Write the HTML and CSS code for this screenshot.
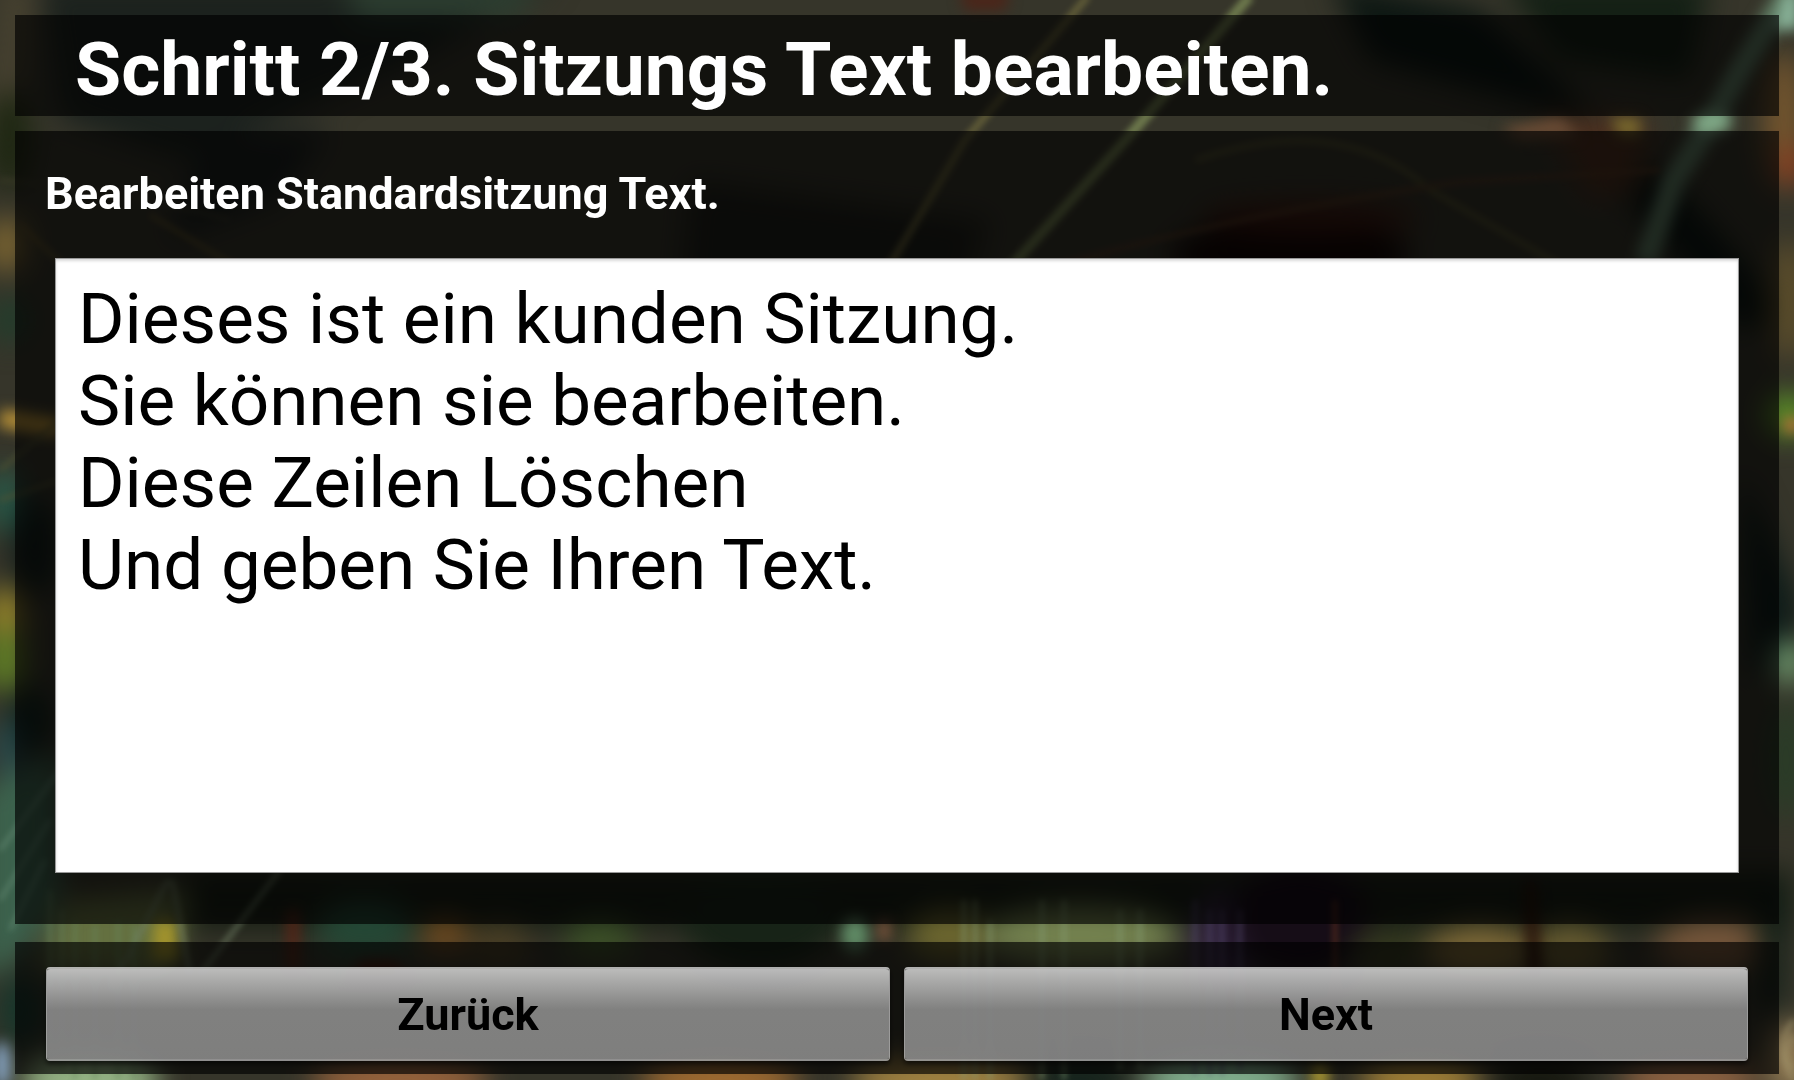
FILE: index.html
```html
<!DOCTYPE html>
<html lang="de">
  <head>
    <meta charset="UTF-8" />
    <meta name="viewport" content="width=device-width, initial-scale=1.0" />
    <title>Sitzungs Text bearbeiten</title>

    <link rel="stylesheet" href="styles.css">
  </head>

  <body>
    <svg class="backdrop" viewBox="0 0 1794 1080" preserveAspectRatio="none" aria-hidden="true">
      <defs>
        <filter id="soft" x="-50%" y="-50%" width="200%" height="200%" color-interpolation-filters="sRGB">
          <feGaussianBlur stdDeviation="14" />
        </filter>
        <filter id="glow" x="-50%" y="-50%" width="200%" height="200%" color-interpolation-filters="sRGB">
          <feGaussianBlur stdDeviation="7" />
        </filter>
        <filter id="ray" x="-20%" y="-20%" width="140%" height="140%" color-interpolation-filters="sRGB">
          <feGaussianBlur stdDeviation="3" />
        </filter>
      </defs>
      <rect width="1794" height="1080" fill="#36352a" />

      <!-- large dark and coloured areas -->
      <g filter="url(#soft)">
        <path d="M40 -20 L560 -20 L420 60 L180 160 L60 120 Z" fill="#1c221e" />
        <path d="M340 -20 L540 -20 L520 20 L360 20 Z" fill="#2b3d30" />
        <path d="M200 140 L330 130 L280 200 L170 240 Z" fill="#1b201f" />
        <path d="M690 180 L990 220 L960 300 L680 300 Z" fill="#1f201b" />
        <path d="M1330 -20 L1480 10 L1690 200 L1794 320 L1740 330 L1550 110 L1370 60 Z" fill="#0d1713" />
        <path d="M1500 -20 L1710 -20 L1690 80 L1560 60 Z" fill="#142015" />
        <ellipse cx="1290" cy="255" rx="120" ry="34" fill="#120706" />
        <ellipse cx="1310" cy="218" rx="110" ry="16" fill="#3d1a12" />
        <path d="M1540 110 L1650 120 L1640 190 L1590 200 Z" fill="#4c3020" />
        <path d="M0 -20 L40 -20 L20 140 L-20 140 Z" fill="#45402f" />
        <ellipse cx="10" cy="140" rx="22" ry="50" fill="#1e2712" />
        <ellipse cx="6" cy="245" rx="20" ry="28" fill="#7a6431" />
        <ellipse cx="10" cy="320" rx="20" ry="24" fill="#223d2c" />
        <ellipse cx="35" cy="545" rx="22" ry="50" fill="#101c19" />
        <ellipse cx="5" cy="500" rx="16" ry="34" fill="#285c4b" />
        <ellipse cx="5" cy="620" rx="18" ry="34" fill="#9b8829" />
        <ellipse cx="5" cy="660" rx="20" ry="32" fill="#618025" />
        <ellipse cx="30" cy="720" rx="20" ry="34" fill="#0e211b" />
        <ellipse cx="8" cy="750" rx="12" ry="34" fill="#274f54" />
        <path d="M-20 790 L60 750 L60 900 L20 960 L-20 980 Z" fill="#3c624d" />
        <ellipse cx="1784" cy="120" rx="20" ry="70" fill="#75562e" />
        <ellipse cx="1790" cy="165" rx="14" ry="20" fill="#963f1f" />
        <ellipse cx="1788" cy="300" rx="20" ry="60" fill="#5d4e2b" />
        <ellipse cx="1788" cy="415" rx="22" ry="22" fill="#5c9427" />
        <path d="M1740 470 L1800 600 L1794 650 L1750 680 Z" fill="#0f1c19" />
        <ellipse cx="1788" cy="662" rx="16" ry="22" fill="#76a476" />
        <ellipse cx="1786" cy="760" rx="20" ry="60" fill="#293c27" />
        <path d="M180 870 L1794 870 L1794 930 L180 930 Z" fill="#181f15" />
        <path d="M60 900 L190 890 L170 980 L40 970 Z" fill="#647040" />
        <ellipse cx="365" cy="930" rx="50" ry="30" fill="#244735" />
        <ellipse cx="445" cy="935" rx="24" ry="18" fill="#744c1f" />
        <ellipse cx="500" cy="945" rx="30" ry="24" fill="#4a3f26" />
        <ellipse cx="600" cy="940" rx="36" ry="20" fill="#3d5228" />
        <ellipse cx="760" cy="920" rx="80" ry="50" fill="#172317" />
        <ellipse cx="950" cy="935" rx="44" ry="26" fill="#6d672f" />
        <ellipse cx="1080" cy="935" rx="100" ry="30" fill="#74824f" />
        <ellipse cx="1225" cy="940" rx="34" ry="50" fill="#33243f" />
        <ellipse cx="1300" cy="920" rx="70" ry="60" fill="#160d17" />
        <ellipse cx="1390" cy="950" rx="40" ry="20" fill="#363a20" />
        <ellipse cx="1480" cy="950" rx="55" ry="26" fill="#7c6837" />
        <ellipse cx="1570" cy="950" rx="40" ry="28" fill="#655a30" />
        <ellipse cx="1715" cy="945" rx="60" ry="28" fill="#74553a" />
        <ellipse cx="1770" cy="950" rx="12" ry="70" fill="#0e1d16" />
        <ellipse cx="20" cy="1010" rx="22" ry="36" fill="#17362b" />
        <ellipse cx="90" cy="1080" rx="70" ry="30" fill="#94b384" />
        <ellipse cx="400" cy="1080" rx="90" ry="22" fill="#9c653d" />
        <ellipse cx="720" cy="1080" rx="80" ry="22" fill="#a66e31" />
        <ellipse cx="940" cy="1080" rx="90" ry="22" fill="#a88742" />
        <ellipse cx="1080" cy="1080" rx="50" ry="24" fill="#14231c" />
        <ellipse cx="1220" cy="1080" rx="80" ry="24" fill="#84b492" />
        <ellipse cx="1420" cy="1080" rx="60" ry="22" fill="#a58236" />
        <ellipse cx="1540" cy="1080" rx="50" ry="24" fill="#15170f" />
        <ellipse cx="1690" cy="1080" rx="70" ry="22" fill="#926442" />
        <ellipse cx="1790" cy="1060" rx="22" ry="40" fill="#957d55" />
      </g>

      <!-- smaller lights -->
      <g filter="url(#glow)">
        <path d="M1790 -10 L1740 70 L1712 120 L1674 180 L1645 262" fill="none" stroke="#5e7a62" stroke-width="22" />
        <ellipse cx="1712" cy="122" rx="20" ry="12" fill="#7fa886" />
        <path d="M1785 -10 L1800 -10 L1800 30 L1775 30 Z" fill="#89b399" />
        <path d="M960 -8 L1010 -8 L1005 10 L965 10 Z" fill="#4d2418" />
        <path d="M0 418 L60 428" fill="none" stroke="#b08b36" stroke-width="18" />
        <path d="M1500 128 L1560 118 L1580 136 L1520 140 Z" fill="#6b4c35" />
        <path d="M1610 118 L1640 118 L1640 136 L1620 136 Z" fill="#7b6b2d" />
        <ellipse cx="1792" cy="425" rx="8" ry="7" fill="#ce6f3a" />
        <path d="M152 960 L154 920 L176 920 L178 960 Z" fill="#a2932c" />
        <path d="M288 970 L288 910 L298 910 L298 970 Z" fill="#5e2415" />
        <path d="M350 980 L410 980 L395 960 L360 960 Z" fill="#451e14" />
        <ellipse cx="855" cy="935" rx="14" ry="18" fill="#5f8a65" />
        <ellipse cx="884" cy="930" rx="6" ry="12" fill="#8c5e43" />
        <path d="M1525 880 L1535 880 L1542 975 L1528 975 Z" fill="#281109" />
        <ellipse cx="2" cy="1065" rx="8" ry="24" fill="#8aa9c8" />
        <ellipse cx="1320" cy="1076" rx="8" ry="16" fill="#b6a231" />
      </g>

      <!-- thin rays -->
      <g filter="url(#ray)" fill="none" opacity="0.75">
        <path d="M1088 -4 L965 140 L875 290" stroke="#716b3d" stroke-width="7" />
        <path d="M1250 -4 L1130 135 L990 290" stroke="#809058" stroke-width="10" />
        <path d="M1196 160 Q1340 110 1430 190 L1560 265" stroke="#57552f" stroke-width="5" />
        <path d="M1030 275 Q1200 220 1460 182 L1660 170" stroke="#553a25" stroke-width="5" />
        <path d="M20 225 L60 262 M150 215 L250 275" stroke="#5b4f2a" stroke-width="5" />
        <path d="M0 180 Q120 190 230 220" stroke="#3d3c29" stroke-width="4" />
        <path d="M0 470 L60 420 M0 500 L60 480" stroke="#505132" stroke-width="4" />
        <path d="M0 850 L60 770 M0 900 L50 820 M10 930 L45 860" stroke="#6b917a" stroke-width="3" />
        <path d="M200 975 L280 870 M110 990 L168 880 M172 880 L190 975" stroke="#718066" stroke-width="4" />
        <path d="M50 890 V1060 M62 910 V1070 M75 920 V1080 M95 925 V1080 M118 920 V1080 M134 925 V1080" stroke="#68865d" stroke-width="3" />
        <path d="M964 900 V1080 M975 900 V1080 M990 920 V1080 M1042 900 V1080 M1064 900 V1080 M1120 910 V1070 M1140 910 V1070" stroke="#86a078" stroke-width="3" />
        <path d="M1195 900 V1075 M1210 910 V1075 M1222 910 V1075 M1240 910 V1070" stroke="#554d70" stroke-width="3" />
        <path d="M1335 900 V1060" stroke="#67331f" stroke-width="4" />
        <path d="M1794 1020 Q1770 1050 1794 1080 M1794 1035 Q1780 1055 1794 1070" stroke="#a59a70" stroke-width="3" />
      </g>
    </svg>

    <header class="panel title-bar">
      <h1>Schritt 2/3. Sitzungs Text bearbeiten.</h1>
    </header>

    <main class="panel editor">
      <label for="sessionText">Bearbeiten Standardsitzung Text.</label>
      <textarea id="sessionText" name="sessionText" spellcheck="false">Dieses ist ein kunden Sitzung.
Sie können sie bearbeiten.
Diese Zeilen Löschen
Und geben Sie Ihren Text.</textarea>
    </main>

    <footer class="panel buttons">
      <button type="button">Zurück</button>
      <button type="button">Next</button>
    </footer>
  </body>
</html>
```

FILE: styles.css
```css
* {
  box-sizing: border-box;
}

body {
  margin: 0;
  min-height: 100vh;
  padding: 15px 15px 6px;
  display: flex;
  flex-direction: column;
  background-color: #34332a;
  font-family: Roboto, "Liberation Sans", sans-serif;
  color: #fff;
}

.backdrop {
  position: fixed;
  top: 0;
  left: 0;
  width: 100%;
  height: 100%;
  z-index: -1;
}

.panel {
  background-color: rgba(0, 0, 0, 0.65);
}

.title-bar {
  padding: 10px 60px 2px;
  margin-bottom: 15px;
}

.title-bar h1 {
  margin: 0;
  font-size: 75px;
  line-height: 89px;
  font-weight: bold;
}

.editor {
  flex: 1;
  display: flex;
  flex-direction: column;
  padding: 36px 40px 51px;
  margin-bottom: 18px;
}

.editor label {
  margin: 0 -10px 38px;
  font-size: 45px;
  line-height: 53px;
  font-weight: bold;
}

.editor textarea {
  flex: 1;
  width: 100%;
  min-height: 370px;
  padding: 19px 22px;
  border: 1px solid #999;
  background-color: #fff;
  box-shadow: inset 0 2px 3px rgba(0, 0, 0, 0.15);
  font-family: inherit;
  font-size: 71px;
  line-height: 82px;
  color: #000;
  resize: none;
  outline: none;
}

.buttons {
  display: flex;
  gap: 14px;
  padding: 25px 31px 13px;
}

.buttons button {
  flex: 1;
  height: 94px;
  border: 1px solid rgba(190, 190, 190, 0.8);
  border-top: 2px solid rgba(215, 215, 215, 0.8);
  border-bottom: 2px solid rgba(175, 175, 175, 0.8);
  border-radius: 4px;
  background: linear-gradient(
    rgba(205, 205, 205, 0.9),
    rgba(140, 140, 140, 0.9) 45%,
    rgba(138, 138, 138, 0.9)
  );
  background-clip: padding-box;
  box-shadow: 0 3px 5px rgba(0, 0, 0, 0.6);
  font-family: inherit;
  font-size: 45px;
  font-weight: bold;
  color: #000;
}
```
